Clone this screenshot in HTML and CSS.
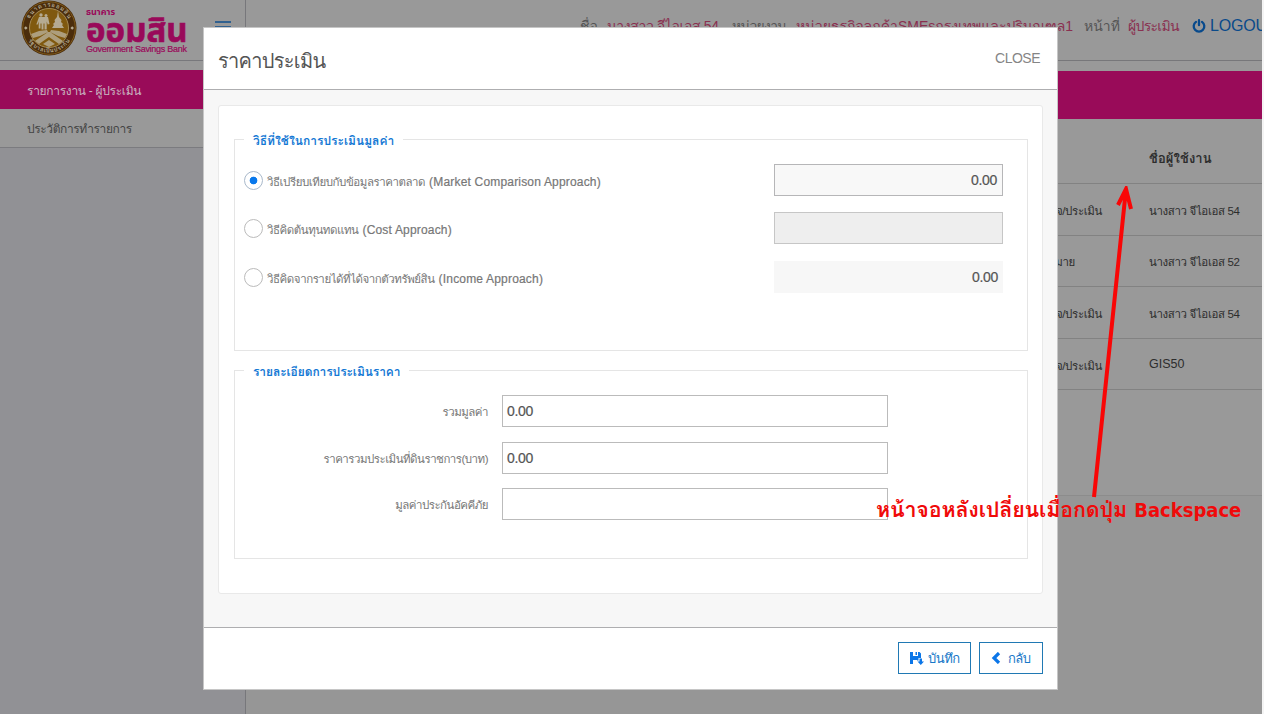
FILE: index.html
```html
<!DOCTYPE html>
<html lang="th">
<head>
<meta charset="utf-8">
<title>ราคาประเมิน</title>
<link rel="stylesheet" href="styles.css">
</head>
<body>
<div class="app">
  <aside class="side">
    <div class="brand">
      <svg class="seal" viewBox="0 0 56 56" width="56" height="56">
        <circle cx="28" cy="28" r="27.5" fill="#4b2d0c"/>
        <circle cx="28" cy="28" r="26.3" fill="none" stroke="#8c651c" stroke-width=".8"/>
        <circle cx="28" cy="28" r="19.5" fill="#80590f" stroke="#a58b55" stroke-width="1"/>
        <defs>
          <path id="arc-top" d="M6.7 28a21.3 21.3 0 0 1 42.6 0"/>
          <path id="arc-bottom" d="M3.5 28a24.5 24.5 0 0 0 49 0"/>
        </defs>
        <text class="seal-text"><textPath href="#arc-top" startOffset="50%" text-anchor="middle" textLength="48">ธนาคารออมสิน</textPath></text>
        <text class="seal-text"><textPath href="#arc-bottom" startOffset="50%" text-anchor="middle" textLength="50">รัฐบาลเป็นประกัน</textPath></text>
        <g fill="#b5aa91">
          <path d="M3 28l1.8-1.8L6.600 28l-1.800 1.800zM49.400 28l1.800-1.800L53 28l-1.800 1.800z"/>
          <path d="M37 11l1 6 2.500 3-.5 2 2 2-1 1 2 3H31l2-3-1-1 2-2-.5-2L36 17z"/>
          <circle cx="20" cy="15" r="1.700"/><circle cx="25" cy="15.500" r="1.500"/>
          <path d="M18 17h9l1.500 7-1.800.5-1-3v8h-2.200v-6h-1v6h-2v-6h-1v5h-1.800v-7l-1 3h-1.400z"/>
          <path d="M10 34l8-3 8-1 1 2-8 4-7 2zM46 34l-8-3-8-1-1 2 8 4 7 2zM14 41l13-9h2l13 9-4 3-10-7-10 7zM22 44l6-4 6 4-6 3z" opacity=".85"/>
        </g>
      </svg>
      <div class="brand-name">
        <span class="brand-top">ธนาคาร</span>
        <span class="brand-main">ออมสิน</span>
        <span class="brand-sub">Government Savings Bank</span>
      </div>
      <span class="burger"></span>
    </div>
    <nav class="menu">
      <a class="item active"><span class="t-m1">รายการงาน - ผู้ประเมิน</span></a>
      <a class="item"><span class="t-m2">ประวัติการทำรายการ</span></a>
    </nav>
  </aside>
  <main class="main">
    <header class="top">
      <span class="key k1">ชื่อ</span><span class="val v1">นางสาว จีไอเอส 54</span>
      <span class="key k2">หน่วยงาน</span><span class="val v2">หน่วยธุรกิจลูกค้าSMEsกรุงเทพและปริมณฑล1</span>
      <span class="key k3">หน้าที่</span><span class="val v3">ผู้ประเมิน</span>
      <svg class="power" viewBox="0 0 14 14" width="14" height="14" fill="none" stroke="#084a8c" stroke-width="2.300" stroke-linecap="round"><path d="M4 2.900a5.300 5.300 0 1 0 6 0M7 1.200v5"/></svg>
      <span class="logout">LOGOUT</span>
    </header>
    <div class="band"></div>
    <div class="grid">
      <div class="row head"><span></span><span class="t-h">ชื่อผู้ใช้งาน</span></div>
      <div class="row r1"><span class="c1">สำรวจ/ประเมิน</span><span class="t-n">นางสาว จีไอเอส 54</span></div>
      <div class="row r2"><span class="c1 short">มอบหมาย</span><span class="t-n">นางสาว จีไอเอส 52</span></div>
      <div class="row r3"><span class="c1">สำรวจ/ประเมิน</span><span class="t-n">นางสาว จีไอเอส 54</span></div>
      <div class="row r4"><span class="c1">สำรวจ/ประเมิน</span><span class="gis">GIS50</span></div>
      <div class="rest"></div>
    </div>
  </main>
  <div class="scroll"></div>
</div>

<section class="modal">
  <header class="modal-head"><h1>ราคาประเมิน</h1><span class="close">CLOSE</span></header>
  <div class="modal-body">
    <div class="panel">
      <div class="group methods">
        <div class="legend"><span class="l1">วิธีที่ใช้ในการประเมินมูลค่า</span></div>
        <div class="method"><i class="radio on"></i><span class="lab"><span class="th a1">วิธีเปรียบเทียบกับข้อมูลราคาตลาด</span><span class="en">(Market Comparison Approach)</span></span><span class="box b1">0.00</span></div>
        <div class="method second"><i class="radio"></i><span class="lab"><span class="th a2">วิธีคิดต้นทุนทดแทน</span><span class="en">(Cost Approach)</span></span><span class="box b2"></span></div>
        <div class="method"><i class="radio"></i><span class="lab"><span class="th a3">วิธีคิดจากรายได้ที่ได้จากตัวทรัพย์สิน</span><span class="en">(Income Approach)</span></span><span class="box b3">0.00</span></div>
      </div>
      <div class="group details">
        <div class="legend"><span class="l2">รายละเอียดการประเมินราคา</span></div>
        <div class="field"><span class="name"><span class="d1">รวมมูลค่า</span></span><span class="input">0.00</span></div>
        <div class="field mid"><span class="name"><span class="d2">ราคารวมประเมินที่ดินราชการ(บาท)</span></span><span class="input">0.00</span></div>
        <div class="field"><span class="name"><span class="d3">มูลค่าประกันอัคคีภัย</span></span><span class="input"></span></div>
      </div>
    </div>
  </div>
  <footer class="modal-foot">
    <button class="btn save"><svg viewBox="0 0 14 14" width="14" height="14"><path fill="#0b76e8" d="M0 1h3v4h5V1h1.500L11 2.500V7H8.500v2.500H7V9H3v4H0zM5.500 1H7v3H5.500zM9.500 7.500h2.500v3h2L10.800 14l-3.300-3.500h2z"/></svg><span class="s1">บันทึก</span></button>
    <button class="btn back"><svg viewBox="0 0 10 12" width="10" height="12"><path fill="none" stroke="#0b76e8" stroke-width="3.200" d="M8 1L3 6l5 5"/></svg><span class="s2">กลับ</span></button>
  </footer>
</section>

<div class="note">หน้าจอหลังเปลี่ยนเมื่อกดปุ่ม <span>Backspace</span></div>
<svg class="arrow" viewBox="0 0 60 314" width="60" height="314"><path fill="none" stroke="#f90606" stroke-width="4" d="M10 311L42 3M34 19L42 3l5 20"/></svg>
</body>
</html>
```
FILE: styles.css
```css
* { box-sizing: border-box; }
body { margin: 0; width: 1264px; height: 714px; overflow: hidden; position: relative; font: 12px/16px "Liberation Sans", "Loma", "Noto Sans Thai Looped", "Noto Looped Thai", "Waree", "Garuda", "Noto Sans Thai", sans-serif; color: #2d2d2d; background: #999; }
span { white-space: nowrap; }
.app { display: flex; width: 1264px; height: 714px; }
.side { width: 246px; border-right: 1px solid #77777b; background: #919195; flex: none; }
.brand { display: flex; height: 61px; background: #999; border-bottom: 1px solid #78787c; padding-left: 21px; }
.seal { flex: none; }
.seal-text { font-size: 6px; font-weight: 700; fill: #b0a68e; }
.brand-name { display: flex; flex-direction: column; flex: none; width: 128px; padding: 6px 0 0 9px; color: #99095a; font-family: "Liberation Sans", "Noto Sans Thai", sans-serif; }
.brand-top { font-size: 9px; line-height: 12px; font-weight: 700; }
.brand-main { font-size: 33px; line-height: 25px; font-weight: 700; -webkit-text-stroke: .6px #99095a; }
.brand-sub { font-size: 9px; line-height: 12px; letter-spacing: -.28px; -webkit-text-stroke: .2px #99095a; }
.burger { flex: none; width: 16px; height: 12px; margin: 21px 0 0 10px; background: repeating-linear-gradient(#31618f 0 2px, transparent 2px 5px); }
.menu { padding-top: 9px; background: #999; border-bottom: 1px solid #7b7b7f; }
.item { display: flex; align-items: center; height: 39px; padding: 2px 0 0 27px; color: #444; font-size: 12px; }
.item.active { background: #990b59; color: #c9b5c0; }
.item:last-child { height: 38px; }
.t-m1 { letter-spacing: -.3px; }
.t-m2 { letter-spacing: -.4px; }
.main { width: 1016px; overflow: hidden; flex: none; }
.top { display: flex; align-items: center; height: 61px; padding: 0 0 9px 334px; border-bottom: 1px solid #77777a; font-size: 14px; }
.top > * { flex: none; }
.key { color: #555; }
.val { color: #8a3050; }
.k1 { width: 27px; }
.v1 { width: 125px; letter-spacing: -.35px; }
.k2 { width: 64px; letter-spacing: -.7px; }
.v2 { width: 288px; }
.k3 { width: 44px; }
.v3 { width: 64px; letter-spacing: -.7px; }
.power { margin-right: 4px; }
.logout { font-size: 16px; color: #0a4a8a; letter-spacing: -.2px; }
.band { height: 48px; margin-top: 10px; background: #990b59; }
.grid { height: 595px; background: #969696; }
.row { display: grid; grid-template-columns: 856px 1fr; align-items: center; border-bottom: 1px solid #828282; background: #999; padding-left: 47px; padding-top: 3px; }
.row > span:first-child { text-align: right; width: 809px; }
.row > .short:first-child { width: 782px; }
.head { height: 65px; padding-top: 16px; font-weight: 700; }
.t-h { font-size: 13px; letter-spacing: .1px; }
.c1, .t-n { font-size: 11.500px; letter-spacing: -.36px; }
.r1, .r3 { height: 52px; }
.r2, .r4 { height: 51px; }
.r2 { padding-top: 1px; }
.gis { font-size: 12.500px; padding-bottom: 4px; }
.rest { height: 106px; background: #999; border-bottom: 1px solid #8c8c8c; }
.scroll { width: 2px; background: #f4f4f4; }

.modal { position: absolute; left: 203px; top: 27px; width: 855px; height: 663px; display: flex; flex-direction: column; border: 1px solid #c6c6c6; background: #fff; }
.modal-head { display: flex; justify-content: space-between; height: 62px; padding: 19px 17px 0 14px; border-bottom: 1px solid #aeaeb0; }
.modal-head h1 { margin: 0; font-size: 20px; line-height: 28px; font-weight: 400; color: #555; letter-spacing: -.7px; }
.close { font-size: 14px; line-height: 22px; color: #858585; letter-spacing: -.5px; }
.modal-body { height: 537px; padding: 15px 14px 0; background: #f7f7f7; }
.panel { height: 489px; padding: 33px 14px 0 15px; background: #fff; border: 1px solid #e9e9e9; border-radius: 3px; }
.group { border: 1px solid #e5e5e5; }
.methods { height: 212px; }
.details { height: 189px; margin-top: 19px; }
.legend { display: flex; height: 34px; margin-top: -10px; }
.legend span { height: 22px; margin-left: 9px; padding: 0 9px; background: #fff; color: #1478d4; font-size: 12px; line-height: 22px; font-weight: 700; }
.l2 { letter-spacing: -.08px; }
.method { display: flex; height: 32px; margin: 0 24px 16px 9px; align-items: center; color: #777; }
.method.second { margin-bottom: 17px; }
.radio { flex: none; width: 19px; height: 19px; border: 1px solid #bbb; border-radius: 50%; margin-right: 4px; }
.radio.on { border-color: #a9b9cb; background: radial-gradient(circle, #0878ec 3.500px, #fff 4.200px); }
.lab { flex: 1; display: flex; gap: 4px; padding-top: 4px; }
.th { font-size: 11.500px; letter-spacing: -.45px; }
.en { letter-spacing: .18px; -webkit-text-stroke: .2px #777; }
.box { width: 229px; height: 32px; padding-right: 5px; border: 1px solid #b6b6b8; text-align: right; font-size: 14px; line-height: 30px; color: #555; background: #f8f8f8; -webkit-text-stroke: .2px #555; letter-spacing: -.3px; }
.b2 { background: #eee; border-color: #c6c6c6; }
.b3 { border-color: #f7f7f7; background: #f7f7f7; padding-right: 4px; }
.field { display: flex; height: 32px; margin-bottom: 15px; align-items: center; color: #777; }
.field.mid { margin-bottom: 14px; }
.name { width: 267px; padding: 2px 14px 0 0; text-align: right; font-size: 11.500px; letter-spacing: -.5px; }
.input { width: 386px; height: 32px; border: 1px solid #bbb; padding-left: 4px; font-size: 14px; line-height: 31px; color: #555; letter-spacing: -.3px; -webkit-text-stroke: .2px #555; }
.modal-foot { display: flex; justify-content: flex-end; gap: 8px; padding: 14px 14px 0; border-top: 1px solid #aeaeb0; }
.btn { display: flex; align-items: center; height: 32px; padding: 0 0 0 11px; border: 1px solid #2079b4; background: #fff; font-family: inherit; font-size: 13px; line-height: 16px; color: #1778c8; }
.btn span { padding-top: 2px; letter-spacing: -.5px; }
.save { width: 73px; gap: 4px; }
.back { width: 64px; gap: 7px; }
.note { position: absolute; left: 876px; top: 496px; font-family: "DejaVu Sans", "Loma", "Noto Sans Thai Looped", "Noto Looped Thai", "Waree", "Noto Sans Thai", sans-serif; font-size: 21.500px; font-weight: 700; line-height: 28px; letter-spacing: -.2px; color: #f00a0a; white-space: nowrap; }
.note span { font-family: "DejaVu Sans Condensed", "DejaVu Sans", sans-serif; font-stretch: condensed; font-size: 20px; letter-spacing: 0; }
.arrow { position: absolute; left: 1084px; top: 186px; }
```
